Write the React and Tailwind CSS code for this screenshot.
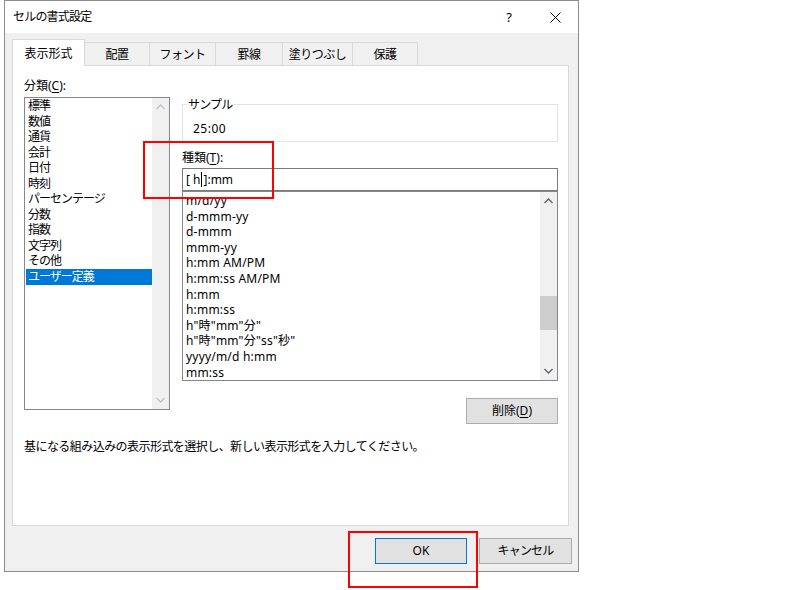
import React from "react";

const F = "font-['Noto_Sans','Noto_Sans_CJK_JP',sans-serif]";

function Chevron({ dir = "up", color = "#606060" }) {
  return (
    <svg width="9" height="6" viewBox="0 0 9 6">
      {dir === "up" ? (
        <polyline points="0.5,5 4.5,1 8.5,5" fill="none" stroke={color} strokeWidth="1.3" />
      ) : (
        <polyline points="0.5,1 4.5,5 8.5,1" fill="none" stroke={color} strokeWidth="1.3" />
      )}
    </svg>
  );
}

const categories = [
  "標準",
  "数値",
  "通貨",
  "会計",
  "日付",
  "時刻",
  "パーセンテージ",
  "分数",
  "指数",
  "文字列",
  "その他",
  "ユーザー定義",
];

const formats = [
  "m/d/yy",
  "d-mmm-yy",
  "d-mmm",
  "mmm-yy",
  "h:mm AM/PM",
  "h:mm:ss AM/PM",
  "h:mm",
  "h:mm:ss",
  'h"時"mm"分"',
  'h"時"mm"分"ss"秒"',
  "yyyy/m/d h:mm",
  "mm:ss",
];

const tabs = [
  { label: "配置", w: "w-[65px]" },
  { label: "フォント", w: "w-[66px]" },
  { label: "罫線", w: "w-[67px]" },
  { label: "塗りつぶし", w: "w-[70px]" },
  { label: "保護", w: "w-[65px]" },
];

export default function App() {
  return (
    <div className={`relative w-[807px] h-[590px] bg-white text-[12px] text-black ${F}`}>
      <div className="ml-[4px] w-[575px] h-[572px] border border-[#8c8c8c] bg-[#f0f0f0] flex flex-col">
        {/* title bar */}
        <div className="h-[32px] bg-white flex items-center">
          <div className="pl-[8px] flex-1 leading-[16px] tracking-[-0.8px]">セルの書式設定</div>
          <div className="w-[46px] h-full flex items-center justify-center text-[13px] leading-none">?</div>
          <div className="w-[46px] h-full flex items-center justify-center">
            <svg width="11" height="11" viewBox="0 0 11 11">
              <path d="M0.5 0.5 L10.5 10.5 M10.5 0.5 L0.5 10.5" stroke="#000" strokeWidth="1" />
            </svg>
          </div>
        </div>

        {/* tabs */}
        <div className="mt-[6px] ml-[7px] flex items-end h-[26px] relative z-10">
          <div className="w-[73px] h-[27px] -mb-[1px] bg-white border-x border-t border-[#d9d9d9] flex items-center justify-center leading-[16px] pt-[2px]">
            表示形式
          </div>
          {tabs.map((t) => (
            <div
              key={t.label}
              className={`${t.w} h-[23px] border-t border-r border-[#d9d9d9] bg-[#f0f0f0] flex items-center justify-center leading-[16px] pt-[1px] tracking-[-0.5px]`}
            >
              {t.label}
            </div>
          ))}
        </div>

        {/* panel */}
        <div className="ml-[7px] w-[557px] h-[461px] bg-white border border-[#d9d9d9] pl-[11px] pt-[12px] flex flex-col">
          <div className="flex">
            {/* left column */}
            <div className="flex flex-col w-[146px]">
              <div className="leading-[16px]">
                分類(<span className="underline underline-offset-2">C</span>):
              </div>
              <div className="mt-[3px] h-[313px] border border-[#828790] flex">
                <div className="flex-1 pl-[1px] flex flex-col">
                  {categories.map((c, i) => (
                    <div
                      key={c}
                      className={`h-[15.55px] leading-[15.55px] pl-[2px] whitespace-nowrap tracking-[-1px] ${
                        i === categories.length - 1 ? "bg-[#0078d7] text-white" : ""
                      }`}
                    >
                      {c}
                    </div>
                  ))}
                </div>
                <div className="w-[17px] bg-[#f0f0f0] flex flex-col items-center justify-between py-[6px]">
                  <Chevron dir="up" color="#c2c2c2" />
                  <Chevron dir="down" color="#c2c2c2" />
                </div>
              </div>
            </div>

            {/* right column */}
            <div className="ml-[12px] w-[376px] flex flex-col">
              <div className="mt-[26px] h-[38px] border border-[#e3e3e3] flex flex-col">
                <div className="-mt-[8px] ml-[4px] px-[1px] w-fit bg-white leading-[16px] tracking-[-0.8px]">サンプル</div>
                <div className="mt-[8px] ml-[10px] leading-[16px] tracking-[0.5px]">25:00</div>
              </div>
              <div className="mt-[8px] leading-[16px]">
                種類(<span className="underline underline-offset-2">T</span>):
              </div>
              <div className="mt-[2px] h-[23px] border border-[#7a7a7a] flex items-center pl-[3px] leading-[16px]">
                <span>[ h</span>
                <span className="inline-block w-[1px] h-[15px] bg-black mx-[1px]"></span>
                <span>]:mm</span>
              </div>
              <div className="h-[190px] border border-[#828790] flex">
                <div className="flex-1 pt-[5px] flex flex-col">
                  <div className="flex-1 overflow-hidden">
                    <div className="-mt-[4px] pl-[3px] flex flex-col">
                      {formats.map((f) => (
                        <div key={f} className="h-[15.6px] leading-[15.6px] whitespace-nowrap tracking-[0.2px]">
                          {f}
                        </div>
                      ))}
                    </div>
                  </div>
                </div>
                <div className="w-[17px] bg-[#f0f0f0] flex flex-col items-center py-[6px]">
                  <Chevron dir="up" />
                  <div className="mt-[92px] w-[17px] h-[34px] bg-[#cdcdcd]"></div>
                  <div className="flex-1"></div>
                  <Chevron dir="down" />
                </div>
              </div>
              <div className="mt-[17px] self-end w-[92px] h-[26px] bg-[#e1e1e1] border border-[#adadad] flex items-center justify-center leading-[16px]">
                削除(<span className="underline underline-offset-2">D</span>)
              </div>
            </div>
          </div>
          <div className="mt-[15px] leading-[16px] whitespace-nowrap tracking-[-0.55px]">
            基になる組み込みの表示形式を選択し、新しい表示形式を入力してください。
          </div>
        </div>

        {/* bottom buttons */}
        <div className="mt-[12px] flex justify-end pr-[6px] gap-[12px]">
          <div className="w-[92px] h-[26px] bg-[#e1e1e1] border border-[#0078d7] flex items-center justify-center leading-[16px]">
            OK
          </div>
          <div className="w-[93px] h-[26px] bg-[#e1e1e1] border border-[#adadad] flex items-center justify-center leading-[16px] tracking-[-0.8px]">
            キャンセル
          </div>
        </div>
      </div>

      {/* red annotation boxes */}
      <div className="absolute left-[143px] top-[141px] w-[131px] h-[58px] border-2 border-[#ff0000] z-20"></div>
      <div className="absolute left-[348px] top-[531px] w-[130px] h-[57px] border-2 border-[#ff0000] z-20"></div>
    </div>
  );
}
